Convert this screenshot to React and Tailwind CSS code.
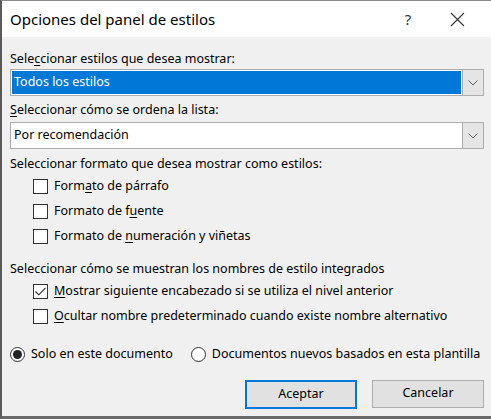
import { useState } from "react";

const U = ({ children }) => <span className="underline underline-offset-2">{children}</span>;

const Chevron = () => (
    <svg width="10" height="6" viewBox="0 0 10 6" fill="none">
        <path d="M0.5 0.5 L5 5 L9.5 0.5" stroke="#606060" strokeWidth="1" />
    </svg>
);

const Select = ({ text, active }) => {
    return (
        <div className="flex h-[27px] border border-[#adadad] bg-white">
            <div className="flex flex-1 p-[1px]">
                <div
                    className={`flex flex-1 items-center pl-[2px] ${active ? "bg-[#0078d7] text-white outline outline-1 outline-dotted outline-[#ffffff80]" : ""}`}
                >
                    {text}
                </div>
            </div>
            <div className="flex w-[21px] items-center justify-center border-l border-[#adadad] bg-[#e5e5e5]">
                <Chevron />
            </div>
        </div>
    );
};

const CheckBox = ({ checked, children }) => {
    return (
        <div className="flex h-[25px] items-center gap-[6px] pl-[23px]">
            <div className="flex h-[15px] w-[15px] items-center justify-center border border-[#333] bg-white">
                {checked && (
                    <svg width="11" height="9" viewBox="0 0 11 9" fill="none">
                        <path d="M0.5 4.5 L3.8 7.8 L10.5 0.8" stroke="#222" strokeWidth="1.1" />
                    </svg>
                )}
            </div>
            <span>{children}</span>
        </div>
    );
};

const Radio = ({ checked, children }) => {
    return (
        <div className="flex items-center gap-[6px]">
            <div className="flex h-[15px] w-[15px] items-center justify-center rounded-full border border-[#333] bg-white">
                {checked && <div className="h-[9px] w-[9px] rounded-full bg-[#222]"></div>}
            </div>
            <span>{children}</span>
        </div>
    );
};

const App = () => {
    const [ok] = useState(true);
    return (
        <div
            className="flex h-[419px] w-[491px] flex-col overflow-hidden border-t border-l-2 border-b-[3px] border-t-[#8a8a8a] border-l-[#5a5a5a] border-b-[#6a6a6a] bg-[#f0f0f0] text-[12.5px] text-black"
            style={{ fontFamily: "'Noto Sans', sans-serif" }}
        >
            <div className="flex h-[36px] shrink-0 items-center bg-white pl-[8px]">
                <span className="flex-1 text-[15px]">Opciones del panel de estilos</span>
                <span className="w-[46px] text-center text-[15px] text-[#333]">?</span>
                <span className="flex w-[60px] items-center justify-center pr-[8px]">
                    <svg width="15" height="15" viewBox="0 0 15 15">
                        <path d="M1 1 L14 14 M14 1 L1 14" stroke="#333" strokeWidth="1.1" />
                    </svg>
                </span>
            </div>

            <div className="flex flex-col pl-[8px] pr-[7px]">
                <div className="mt-[12px] h-[20px] leading-[20px]">
                    Sele<U>c</U>cionar estilos que desea mostrar:
                </div>
                <div>
                    <Select text="Todos los estilos" active={ok} />
                </div>
                <div className="mt-[4px] h-[20px] leading-[20px]">
                    <U>S</U>eleccionar cómo se ordena la lista:
                </div>
                <div className="mt-[2px]">
                    <Select text="Por recomendación" />
                </div>
                <div className="mt-[5px] h-[20px] leading-[20px]">
                    Seleccionar formato que desea mostrar como estilos:
                </div>
                <CheckBox>
                    Form<U>a</U>to de párrafo
                </CheckBox>
                <CheckBox>
                    Formato de f<U>u</U>ente
                </CheckBox>
                <CheckBox>
                    Formato de <U>n</U>umeración y viñetas
                </CheckBox>
                <div className="mt-[10px] h-[20px] leading-[20px]">
                    Seleccionar cómo se muestran los nombres de estilo integrados
                </div>
                <CheckBox checked>
                    <U>M</U>ostrar siguiente encabezado si se utiliza el nivel anterior
                </CheckBox>
                <CheckBox>
                    <U>O</U>cultar nombre predeterminado cuando existe nombre alternativo
                </CheckBox>
                <div className="mt-[16px] flex items-center gap-[18px]">
                    <Radio checked>Solo en este documento</Radio>
                    <Radio>Documentos nuevos basados en esta plantilla</Radio>
                </div>
                <div className="mt-[16px] flex justify-end gap-[15px]">
                    <button className="h-[29px] w-[112px] border-2 border-[#0078d7] bg-[#e1e1e1]">Aceptar</button>
                    <button className="h-[28px] w-[112px] border border-[#adadad] bg-[#e1e1e1]">Cancelar</button>
                </div>
            </div>
        </div>
    );
};

export default App;
